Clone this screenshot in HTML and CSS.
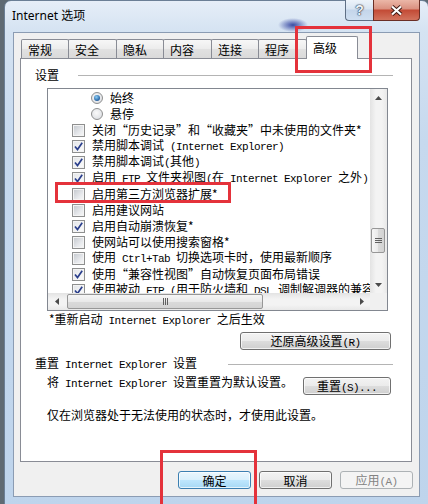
FILE: index.html
```html
<!DOCTYPE html>
<html lang="zh-CN">
<head>
    <meta charset="UTF-8">
    <title>Internet 选项</title>
    <link rel="stylesheet" href="styles.css">
</head>
<body>
    <div class="window">
        <div class="titlebar">
            <span class="title">Internet 选项</span>
            <div class="caption">
                <div class="cap-btn cap-help">?</div>
                <div class="cap-btn cap-close">
                    <svg width="13" height="11" viewBox="0 0 13 11">
                        <path d="M2 1.5 L11 9.5 M11 1.5 L2 9.5" stroke="#3b1610" stroke-width="4" fill="none"/>
                        <path d="M2 1.5 L11 9.5 M11 1.5 L2 9.5" stroke="#ffffff" stroke-width="2.2" fill="none"/>
                    </svg>
                </div>
            </div>
        </div>

        <div class="client">
            <div class="tabs">
                <div class="tab">常规</div>
                <div class="tab">安全</div>
                <div class="tab">隐私</div>
                <div class="tab">内容</div>
                <div class="tab">连接</div>
                <div class="tab">程序</div>
                <div class="tab active">高级</div>
            </div>

            <div class="page">
                <div class="group"><span>设置</span><span class="rule"></span></div>

                <div class="listbox">
                    <div class="items">
                        <div class="item sub"><span class="radio on"></span><span>始终</span></div>
                        <div class="item sub"><span class="radio"></span><span>悬停</span></div>
                        <div class="item"><span class="cb"></span><span>关闭“历史记录”和“收藏夹”中未使用的文件夹*</span></div>
                        <div class="item"><span class="cb on"><svg width="9" height="9" viewBox="0 0 9 9"><path d="M1 4.5 L3.5 7.5 L8.2 0.8" fill="none" stroke="#2b3f8c" stroke-width="1.7"/></svg></span><span>禁用脚本调试<span class="en"> (Internet Explorer)</span></span></div>
                        <div class="item"><span class="cb on"><svg width="9" height="9" viewBox="0 0 9 9"><path d="M1 4.5 L3.5 7.5 L8.2 0.8" fill="none" stroke="#2b3f8c" stroke-width="1.7"/></svg></span><span>禁用脚本调试<span class="en">(</span>其他<span class="en">)</span></span></div>
                        <div class="item"><span class="cb on"><svg width="9" height="9" viewBox="0 0 9 9"><path d="M1 4.5 L3.5 7.5 L8.2 0.8" fill="none" stroke="#2b3f8c" stroke-width="1.7"/></svg></span><span>启用<span class="en"> FTP </span>文件夹视图<span class="en">(</span>在<span class="en"> Internet Explorer </span>之外<span class="en">)</span></span></div>
                        <div class="item"><span class="cb"></span><span>启用第三方浏览器扩展*</span></div>
                        <div class="item"><span class="cb"></span><span>启用建议网站</span></div>
                        <div class="item"><span class="cb on"><svg width="9" height="9" viewBox="0 0 9 9"><path d="M1 4.5 L3.5 7.5 L8.2 0.8" fill="none" stroke="#2b3f8c" stroke-width="1.7"/></svg></span><span>启用自动崩溃恢复*</span></div>
                        <div class="item"><span class="cb"></span><span>使网站可以使用搜索窗格*</span></div>
                        <div class="item"><span class="cb"></span><span>使用<span class="en"> Ctrl+Tab </span>切换选项卡时，使用最新顺序</span></div>
                        <div class="item"><span class="cb on"><svg width="9" height="9" viewBox="0 0 9 9"><path d="M1 4.5 L3.5 7.5 L8.2 0.8" fill="none" stroke="#2b3f8c" stroke-width="1.7"/></svg></span><span>使用“兼容性视图”自动恢复页面布局错误</span></div>
                        <div class="item"><span class="cb on"><svg width="9" height="9" viewBox="0 0 9 9"><path d="M1 4.5 L3.5 7.5 L8.2 0.8" fill="none" stroke="#2b3f8c" stroke-width="1.7"/></svg></span><span>使用被动<span class="en"> FTP (</span>用于防火墙和<span class="en"> DSL </span>调制解调器的兼容性<span class="en">)</span></span></div>
                    </div>
                    <div class="vscroll">
                        <div class="arrow"><svg width="7" height="4" viewBox="0 0 7 4"><path d="M0 4 L3.5 0 L7 4 Z" fill="#4a4a4a"/></svg></div>
                        <div class="vtrack">
                            <div class="vthumb"><svg width="7" height="7" viewBox="0 0 7 7"><path d="M0 1.5 H7 M0 3.5 H7 M0 5.5 H7" stroke="#606060" stroke-width="1"/></svg></div>
                        </div>
                        <div class="arrow"><svg width="7" height="4" viewBox="0 0 7 4"><path d="M0 0 L3.5 4 L7 0 Z" fill="#4a4a4a"/></svg></div>
                    </div>
                    <div class="hscroll">
                        <div class="arrow"><svg width="4" height="7" viewBox="0 0 4 7"><path d="M4 0 L0 3.5 L4 7 Z" fill="#4a4a4a"/></svg></div>
                        <div class="htrack">
                            <div class="hthumb"><svg width="7" height="7" viewBox="0 0 7 7"><path d="M1.5 0 V7 M3.5 0 V7 M5.5 0 V7" stroke="#606060" stroke-width="1"/></svg></div>
                        </div>
                        <div class="arrow"><svg width="4" height="7" viewBox="0 0 4 7"><path d="M0 0 L4 3.5 L0 7 Z" fill="#4a4a4a"/></svg></div>
                    </div>
                    <div class="corner"></div>
                </div>

                <div class="note">*重新启动<span class="en"> Internet Explorer </span>之后生效</div>
                <div class="restore">
                    <button class="btn btn-wide">还原高级设置<span class="en">(R)</span></button>
                </div>

                <div class="group group-reset"><span>重置<span class="en"> Internet Explorer </span>设置</span><span class="rule"></span></div>
                <div class="reset">
                    <span>将<span class="en"> Internet Explorer </span>设置重置为默认设置。</span>
                    <button class="btn btn-reset">重置<span class="en">(S)...</span></button>
                </div>
                <div class="hint">仅在浏览器处于无法使用的状态时，才使用此设置。</div>
            </div>

            <div class="actions">
                <button class="btn btn-default">确定</button>
                <button class="btn">取消</button>
                <button class="btn" disabled>应用<span class="en">(A)</span></button>
            </div>
        </div>
    </div>

    <div class="mark mark-tab"></div>
    <div class="mark mark-item"></div>
    <div class="mark mark-ok"></div>
</body>
</html>
```

FILE: styles.css
```css
* {
    box-sizing: border-box;
}

body {
    margin: 0;
    width: 428px;
    height: 504px;
    overflow: hidden;
    position: relative;
    background: #5f6a73;
    font-family: "Noto Sans CJK SC", sans-serif;
    font-size: 12px;
    line-height: 16px;
    color: #000;
}

.en {
    font-family: "Liberation Mono", monospace;
    font-size: 11px;
    letter-spacing: -0.6px;
}

/* window frame */
.window {
    margin-left: 4px;
    width: 425px;
    height: 512px;
    border: 1px solid #6b7f96;
    border-radius: 7px 7px 0 0;
    background:
        radial-gradient(ellipse 15px 7px at 288px 24px, rgba(30, 48, 150, 0.85), rgba(30, 48, 150, 0)),
        linear-gradient(#e6eef8, #d5e3f2 30px, #c6d9ee 140px, #bed4ec);
}

.titlebar {
    display: flex;
    height: 31px;
}

.title {
    padding-left: 7px;
    line-height: 29px;
    font-family: "Noto Sans", "Noto Sans CJK SC", sans-serif;
    font-size: 12px;
}

.caption {
    display: flex;
    height: 21px;
    margin: -1px 8px 0 auto;
}

.cap-btn {
    display: flex;
    align-items: center;
    justify-content: center;
    height: 21px;
    border: 1px solid #5f6f85;
    border-top: none;
}

.cap-help {
    width: 28px;
    border-right: none;
    border-radius: 0 0 0 4px;
    background: linear-gradient(#edf3fa, #d9e5f2 45%, #c4d5ea 50%, #cfdff1);
    font: bold 14px "Liberation Sans", sans-serif;
    color: #eef2f7;
    text-shadow: 0 0 1px #2f3d50, 0 0 1px #2f3d50, 0 0 2px #2f3d50;
}

.cap-close {
    width: 47px;
    border-color: #6a2e25;
    border-radius: 0 0 4px 0;
    background: linear-gradient(#ebb7a8, #da907f 45%, #c34a35 50%, #d2735d);
}

.client {
    height: 465px;
    margin: 0 8px;
    padding: 3px 7px 0 6px;
    border: 1px solid #8b9cb3;
    background: #f0f0f0;
}

/* tabs */
.tabs {
    display: flex;
    align-items: flex-end;
    height: 22px;
    padding-left: 1px;
}

.tab {
    width: 48px;
    height: 19px;
    margin-right: -1px;
    padding: 2px 0 0 6px;
    border: 1px solid #898c95;
    border-bottom: none;
    border-radius: 2px 2px 0 0;
    background: linear-gradient(#f7f7f7, #ececec 50%, #e1e1e1 51%, #dadada);
}

.tab:nth-child(even) {
    width: 49px;
}

.tab.active {
    position: relative;
    z-index: 1;
    width: 52px;
    height: 23px;
    margin-bottom: -1px;
    padding-top: 3px;
    background: #fff;
}

.page {
    height: 404px;
    border: 1px solid #898c95;
    background: #fff;
}

.group {
    display: flex;
    align-items: center;
    height: 16px;
    margin: 8px 18px 0 14px;
}

.rule {
    flex: 1;
    height: 1px;
    margin-left: 19px;
    background: #b4b4b4;
}

.group-reset {
    margin-top: 6px;
}

.group-reset .rule {
    margin-left: 31px;
}

/* settings list */
.listbox {
    display: grid;
    grid-template-columns: 1fr 17px;
    grid-template-rows: 1fr 17px;
    width: 341px;
    height: 223px;
    margin: 5px 0 0 26px;
    border: 1px solid #828790;
}

.items {
    overflow: hidden;
    padding-top: 1px;
}

.item {
    display: flex;
    align-items: center;
    height: 16px;
    padding-left: 24px;
    white-space: nowrap;
}

.item.sub {
    padding-left: 43px;
}

.cb {
    display: flex;
    align-items: center;
    justify-content: center;
    flex: none;
    width: 13px;
    height: 13px;
    margin-right: 7px;
    border: 1px solid #8e8f8f;
    background: linear-gradient(135deg, #c2c6cc, #e9ebee 65%, #f8f8f8);
    box-shadow: inset 0 0 0 1px #f4f4f4;
}

.cb.on {
    background: linear-gradient(135deg, #e2e4e8, #f4f5f6 65%, #fbfbfb);
}

.radio {
    display: flex;
    align-items: center;
    justify-content: center;
    flex: none;
    width: 12px;
    height: 12px;
    margin-right: 7px;
    border: 1px solid #8e8f8f;
    border-radius: 50%;
    background: radial-gradient(circle at 45% 40%, #fafafa, #d6d9de);
}

.radio.on::after {
    content: "";
    width: 6px;
    height: 6px;
    border-radius: 50%;
    background: radial-gradient(circle at 40% 35%, #8fd0f6, #2f6fae 60%, #1b3c76);
}

.vscroll {
    display: flex;
    flex-direction: column;
    background: linear-gradient(to right, #e3e3e3, #f3f3f3 35%, #f3f3f3 70%, #e8e8e8);
}

.hscroll {
    display: flex;
    background: linear-gradient(#e3e3e3, #f3f3f3 35%, #f3f3f3 70%, #e8e8e8);
}

.arrow {
    display: flex;
    align-items: center;
    justify-content: center;
    flex: none;
    width: 17px;
    height: 17px;
}

.vtrack,
.htrack {
    flex: 1;
}

.vthumb,
.hthumb {
    display: flex;
    align-items: center;
    justify-content: center;
    border: 1px solid #979797;
    border-radius: 2px;
}

.vthumb {
    width: 14px;
    height: 25px;
    margin: 122px 0 0 1px;
    background: linear-gradient(to right, #f6f6f6, #e9e9e9 50%, #dadada 51%, #d3d3d3);
}

.hthumb {
    width: 196px;
    height: 15px;
    margin: 1px 0 0 2px;
    background: linear-gradient(#f6f6f6, #e9e9e9 50%, #dadada 51%, #d3d3d3);
}

.corner {
    background: #f0f0f0;
}

.note {
    margin-left: 28px;
}

.restore {
    display: flex;
    justify-content: flex-end;
    margin: 3px 20px 0 0;
}

.reset {
    display: flex;
    justify-content: space-between;
    align-items: flex-start;
    margin: 2px 20px 0 26px;
}

.hint {
    margin: 12px 0 0 26px;
}

/* buttons */
.btn {
    height: 18px;
    padding: 0;
    border: 1px solid #707070;
    border-radius: 3px;
    background: linear-gradient(#f3f3f3, #ebebeb 50%, #dddddd 51%, #cfcfcf);
    box-shadow: inset 0 0 0 1px rgba(255, 255, 255, 0.7);
    font: inherit;
    line-height: 15px;
    color: #000;
}

.btn-wide {
    width: 151px;
}

.btn-reset {
    width: 88px;
    margin-top: 3px;
}

.btn-default {
    border-color: #3c7fb1;
    background: linear-gradient(#eaf6fd, #d9f0fc 50%, #bee6fd 51%, #a7d9f5);
}

.btn:disabled {
    border-color: #adb2b5;
    background: #f4f4f4;
    box-shadow: none;
    color: #838383;
}

.actions {
    display: flex;
    justify-content: flex-end;
    gap: 8px;
    margin: 9px -1px 0 0;
}

.actions .btn {
    width: 73px;
}

/* red annotation boxes */
.mark {
    position: absolute;
    border: 3px solid #e4323b;
}

.mark-tab {
    left: 295px;
    top: 26px;
    width: 77px;
    height: 47px;
}

.mark-item {
    left: 55px;
    top: 182px;
    width: 176px;
    height: 21px;
}

.mark-ok {
    left: 160px;
    top: 450px;
    width: 97px;
    height: 60px;
}
```
